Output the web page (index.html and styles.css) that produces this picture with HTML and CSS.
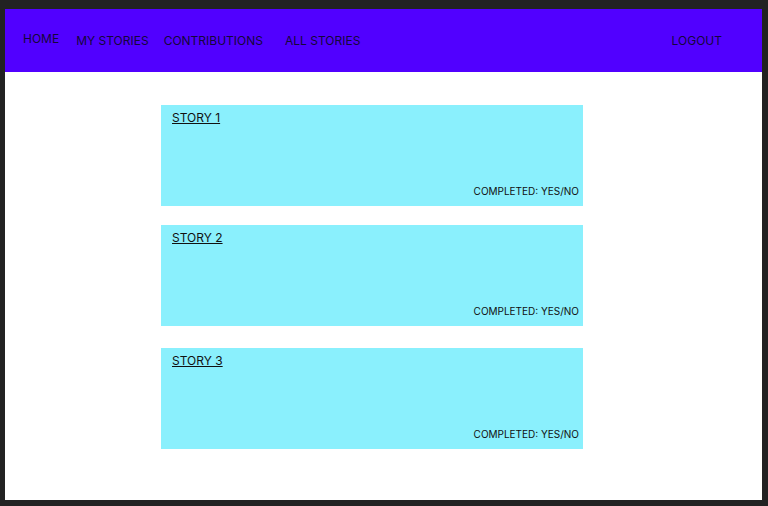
FILE: index.html
```html
<!DOCTYPE html>
<html>
<head>
<meta charset="utf-8">
<link rel="stylesheet" href="styles.css">
</head>
<body>
<div class="frame">
  <header class="nav">
    <a class="nav-link home">HOME</a>
    <a class="nav-link my">MY STORIES</a>
    <a class="nav-link contrib">CONTRIBUTIONS</a>
    <a class="nav-link all">ALL STORIES</a>
    <a class="nav-link logout">LOGOUT</a>
  </header>
  <main class="stories">
    <section class="card">
      <a class="card-title">STORY 1</a>
      <div class="card-status">COMPLETED: YES/NO</div>
    </section>
    <section class="card">
      <a class="card-title">STORY 2</a>
      <div class="card-status">COMPLETED: YES/NO</div>
    </section>
    <section class="card">
      <a class="card-title">STORY 3</a>
      <div class="card-status">COMPLETED: YES/NO</div>
    </section>
  </main>
</div>
</body>
</html>
```
FILE: styles.css
```css
html, body {
  margin: 0;
  padding: 0;
  background: #222222;
  height: 506px;
  overflow: hidden;
}
body {
  font-family: Inter, "Liberation Sans", sans-serif;
  color: #111;
}
.frame {
  margin: 9px 6px 0 5px;
  height: 491px;
  background: #ffffff;
}
.nav {
  height: 63px;
  background: #5100ff;
  display: flex;
  align-items: center;
  padding: 0 40px 0 18px;
}
.nav-link {
  font-size: 12px;
  color: #15073a;
  line-height: 14px;
}
.home { margin-top: -4px; }
.my { margin-left: 17px; }
.contrib { margin-left: 15px; }
.all { margin-left: 22px; }
.logout { margin-left: auto; }
.stories {
  display: flex;
  flex-direction: column;
  padding: 33px 0 0 156px;
  width: 422px;
}
.card {
  height: 101px;
  background: #8af0fd;
  display: flex;
  flex-direction: column;
  justify-content: space-between;
  padding: 6px 4px 9px 11px;
  box-sizing: border-box;
}
.card + .card { margin-top: 19px; }
.card:nth-child(3) { margin-top: 22px; }
.card-title {
  font-size: 12px;
  line-height: 14px;
  text-decoration: underline;
  color: #111;
  align-self: flex-start;
}
.card-status {
  font-size: 10px;
  line-height: 12px;
  text-align: right;
  color: #111;
}
```
